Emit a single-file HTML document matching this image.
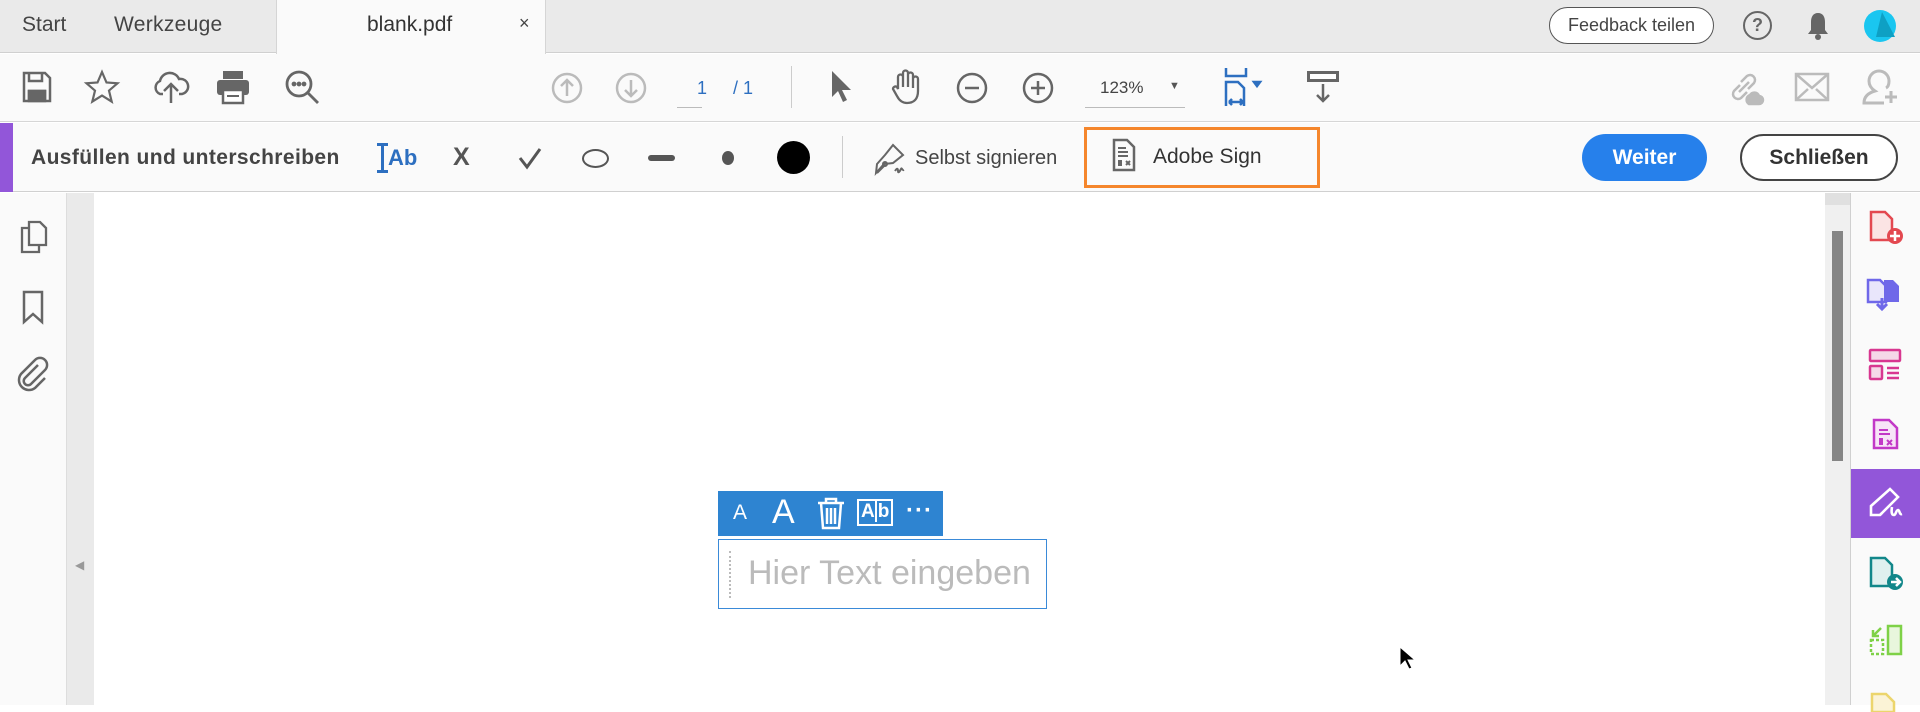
<!DOCTYPE html>
<html><head><meta charset="utf-8"><style>
*{margin:0;padding:0;box-sizing:border-box}
body{width:1920px;height:705px;overflow:hidden;background:#fff;font-family:"Liberation Sans",sans-serif;position:relative;color:#4b4b4b}
.a{position:absolute}
svg{position:absolute;overflow:visible}
</style></head><body>
<div class="a" style="left:0;top:0;width:1920px;height:53px;background:#eaeaea;border-bottom:1px solid #d0d0d0"></div>
<div class="a" style="left:276px;top:0;width:270px;height:54px;background:#fafafa;border-left:1px solid #d5d5d5;border-right:1px solid #d5d5d5"></div>
<div class="a" style="left:22px;top:13px;font-size:21px;color:#444">Start</div>
<div class="a" style="left:114px;top:13px;font-size:21px;color:#444;letter-spacing:0.3px">Werkzeuge</div>
<div class="a" style="left:367px;top:13px;font-size:21px;color:#333">blank.pdf</div>
<div class="a" style="left:519px;top:13px;font-size:18px;color:#444">×</div>
<div class="a" style="left:1549px;top:7px;width:165px;height:37px;border:1.5px solid #555;border-radius:19px;background:#fff;font-size:18px;color:#444;text-align:center;line-height:34px">Feedback teilen</div>
<div class="a" style="left:1743px;top:11px;width:29px;height:29px;border:2.5px solid #666;border-radius:50%;text-align:center;font-size:18px;font-weight:bold;color:#666;line-height:25px">?</div>
<svg style="left:1806px;top:11px" width="24" height="30"><path d="M12 2c-5 0-7 4-7 9v8l-3 4h20l-3-4v-8c0-5-2-9-7-9z" fill="#666"/><circle cx="12" cy="26" r="3" fill="#666"/></svg>
<svg style="left:1863px;top:9px" width="34" height="34"><ellipse cx="17" cy="17" rx="16" ry="16" fill="#1ac6f0"/><path d="M19 3 L32 28 L13 28Z" fill="#0ea0c4"/></svg>
<div class="a" style="left:0;top:54px;width:1920px;height:68px;background:#fafafa;border-bottom:1px solid #d6d6d6"></div>
<svg style="left:22px;top:71px" width="30" height="32" fill="none" stroke="#666" stroke-width="2.5"><path d="M2 2h21l5 5v23H2z"/><path d="M7 2v8h13V2M7 30V20h16v10"/><rect x="7" y="20" width="16" height="10" fill="#666"/></svg>
<svg style="left:85px;top:70px" width="34" height="34" fill="none" stroke="#666" stroke-width="2.2"><path d="M17 2l4.5 10.5 11 .8-8.5 7.3 2.7 11L17 25.6 7.3 31.6 10 20.6 1.5 13.3l11-.8z"/></svg>
<svg style="left:152px;top:70px" width="38" height="34" fill="none" stroke="#666" stroke-width="2.5"><path d="M11 24H8a7 7 0 0 1 0-13 10 10 0 0 1 19-2 7 7 0 0 1 3 15h-3"/><path d="M19 33V15M12 21l7-7 7 7"/></svg>
<svg style="left:216px;top:70px" width="34" height="34"><rect x="7" y="1" width="20" height="8" fill="#666"/><rect x="1" y="10" width="32" height="15" rx="3" fill="#666"/><rect x="7" y="20" width="20" height="13" fill="#fff" stroke="#666" stroke-width="2.5"/><rect x="11" y="25" width="12" height="2" fill="#666"/></svg>
<svg style="left:285px;top:70px" width="36" height="36" fill="none" stroke="#666" stroke-width="2.8"><circle cx="14" cy="14" r="12"/><path d="M23 23l10 10"/><circle cx="9" cy="14" r="1" fill="#666"/><circle cx="14" cy="14" r="1" fill="#666"/><circle cx="19" cy="14" r="1" fill="#666"/></svg>
<svg style="left:551px;top:72px" width="32" height="32" fill="none" stroke="#bbb" stroke-width="2.5"><circle cx="16" cy="16" r="14"/><path d="M16 24V9M10 14l6-6 6 6"/></svg>
<svg style="left:615px;top:72px" width="32" height="32" fill="none" stroke="#bbb" stroke-width="2.5"><circle cx="16" cy="16" r="14"/><path d="M16 8v15M10 18l6 6 6-6"/></svg>
<div class="a" style="left:697px;top:78px;font-size:18px;color:#2d6fc0">1</div>
<div class="a" style="left:677px;top:107px;width:25px;height:1px;background:#bbb"></div>
<div class="a" style="left:733px;top:78px;font-size:18px;color:#2d6fc0">/ 1</div>
<div class="a" style="left:791px;top:66px;width:1px;height:42px;background:#ccc"></div>
<svg style="left:829px;top:70px" width="24" height="34"><path d="M3 1v26l6-6 5 11 4-2-5-10h9z" fill="#666"/></svg>
<svg style="left:889px;top:69px" width="34" height="36" fill="none" stroke="#666" stroke-width="2.3"><path d="M9 20V8a2.5 2.5 0 0 1 5 0v10V4a2.5 2.5 0 0 1 5 0v14V6a2.5 2.5 0 0 1 5 0v13V10a2.5 2.5 0 0 1 5 0v12c0 8-4 12-11 12-5 0-8-3-10-7l-4-7a2.5 2.5 0 0 1 4-2z"/></svg>
<svg style="left:956px;top:72px" width="32" height="32" fill="none" stroke="#666" stroke-width="2.5"><circle cx="16" cy="16" r="14"/><path d="M9 16h14"/></svg>
<svg style="left:1022px;top:72px" width="32" height="32" fill="none" stroke="#666" stroke-width="2.5"><circle cx="16" cy="16" r="14"/><path d="M9 16h14M16 9v14"/></svg>
<div class="a" style="left:1100px;top:78px;font-size:17px;color:#444">123%</div>
<div class="a" style="left:1169px;top:80px;font-size:11px;color:#555">▼</div>
<div class="a" style="left:1085px;top:107px;width:100px;height:1px;background:#bbb"></div>
<svg style="left:1224px;top:68px" width="40" height="40" fill="none" stroke="#2d6fc0" stroke-width="2.5"><path d="M2 0v8h20V0M2 38V14h12l6 6v18M5 34h14M5 34l3-3M5 34l3 3M19 34l-3-3M19 34l-3 3"/><path d="M30 14l6 0-3 4z" fill="#2d6fc0"/></svg>
<svg style="left:1306px;top:70px" width="34" height="34"><rect x="1" y="1" width="32" height="11" fill="#666"/><rect x="4" y="4" width="26" height="5" fill="#fff"/><path d="M17 14v17M11 25l6 6 6-6" fill="none" stroke="#666" stroke-width="2.5"/></svg>
<svg style="left:1727px;top:70px" width="36" height="36" fill="none" stroke="#bbb" stroke-width="2.5"><path d="M14 12l6-6a5 5 0 0 1 7 7l-6 6M20 22l-6 6a5 5 0 0 1-7-7l6-6M12 22l10-10"/><path d="M22 34a5 5 0 0 1 1-9 5 5 0 0 1 9 1 4 4 0 0 1 0 8z" fill="#bbb"/></svg>
<svg style="left:1795px;top:73px" width="34" height="28" fill="none" stroke="#bbb" stroke-width="2.5"><rect x="1" y="1" width="32" height="26"/><path d="M1 1l16 14 16-14M1 27l12-11M33 27l-12-11"/></svg>
<svg style="left:1863px;top:69px" width="34" height="36"><path d="M16 2a10 10 0 0 0-10 10c0 5 3 8 6 10-7 2-11 6-11 12h20" fill="none" stroke="#bbb" stroke-width="3"/><path d="M16 2a10 10 0 0 1 10 10c0 3-1 6-3 7" fill="none" stroke="#bbb" stroke-width="3"/><path d="M28 22v12M22 28h12" stroke="#bbb" stroke-width="3"/></svg>
<div class="a" style="left:0;top:123px;width:1920px;height:69px;background:#fafafa;border-bottom:1px solid #d0d0d0"></div>
<div class="a" style="left:0;top:123px;width:13px;height:69px;background:#9256d9"></div>
<div class="a" style="left:31px;top:146px;font-size:21px;font-weight:bold;color:#444;letter-spacing:0.4px">Ausfüllen und unterschreiben</div>
<div class="a" style="left:381px;top:143px;width:3px;height:30px;background:#2d6fc0"></div>
<div class="a" style="left:377px;top:143px;width:11px;height:3px;background:#2d6fc0"></div>
<div class="a" style="left:377px;top:170px;width:11px;height:3px;background:#2d6fc0"></div>
<div class="a" style="left:388px;top:145px;font-size:22px;font-weight:bold;color:#2d6fc0">Ab</div>
<div class="a" style="left:453px;top:143px;font-size:25px;color:#555;font-weight:bold">X</div>
<svg style="left:518px;top:147px" width="24" height="22"><path d="M2 11l7 9L22 2" fill="none" stroke="#555" stroke-width="3"/></svg>
<div class="a" style="left:582px;top:149px;width:27px;height:19px;border:2.5px solid #555;border-radius:50%"></div>
<div class="a" style="left:648px;top:155px;width:27px;height:6px;border-radius:3px;background:#555"></div>
<div class="a" style="left:722px;top:151px;width:12px;height:14px;border-radius:50%;background:#555"></div>
<div class="a" style="left:777px;top:141px;width:33px;height:33px;border-radius:50%;background:#000"></div>
<div class="a" style="left:842px;top:136px;width:1px;height:42px;background:#ccc"></div>
<svg style="left:873px;top:141px" width="36" height="34" fill="none" stroke="#666" stroke-width="2"><path d="M20 4l10 10-10 8-9 1-8 9 1-9 8-9z"/><path d="M4 32l7-7"/><circle cx="12" cy="23" r="2"/><path d="M22 30c2-3 3-3 3 0s2 0 3-2 1 2 3 1"/></svg>
<div class="a" style="left:915px;top:147px;font-size:20px;color:#444">Selbst signieren</div>
<div class="a" style="left:1084px;top:127px;width:236px;height:61px;border:3px solid #f5862c"></div>
<svg style="left:1112px;top:138px" width="24" height="34" fill="none" stroke="#666" stroke-width="2.5"><path d="M2 2h13l7 7v23H2z"/><path d="M6 10h8M6 14h10M6 18h10" stroke-width="2"/><rect x="6" y="22" width="4" height="6" fill="#666" stroke="none"/><path d="M14 23l4 4M18 23l-4 4" stroke-width="2"/></svg>
<div class="a" style="left:1153px;top:145px;font-size:21px;color:#333">Adobe Sign</div>
<div class="a" style="left:1582px;top:134px;width:125px;height:47px;border-radius:24px;background:#2680eb;color:#fff;font-size:21px;font-weight:bold;text-align:center;line-height:47px">Weiter</div>
<div class="a" style="left:1740px;top:134px;width:158px;height:47px;border-radius:24px;border:2px solid #444;background:#fff;color:#333;font-size:21px;font-weight:bold;text-align:center;line-height:43px">Schließen</div>
<div class="a" style="left:0;top:193px;width:67px;height:512px;background:#fafafa;border-right:1px solid #ddd"></div>
<div class="a" style="left:67px;top:193px;width:27px;height:512px;background:#eaeaea"></div>
<div class="a" style="left:75px;top:558px;font-size:12px;color:#999">◀</div>
<svg style="left:20px;top:220px" width="28" height="34" fill="none" stroke="#666" stroke-width="2.3"><path d="M9 2h11l6 6v17H9z"/><path d="M9 8H2v24h17v-7"/></svg>
<svg style="left:22px;top:290px" width="22" height="34" fill="none" stroke="#666" stroke-width="2.5"><path d="M2 2h18v30l-9-8-9 8z"/></svg>
<svg style="left:16px;top:356px" width="34" height="34" fill="none" stroke="#666" stroke-width="2.5"><path d="M22 9L9 22a4 4 0 0 0 6 6l14-14a7 7 0 0 0-10-10L5 18a10 10 0 0 0 14 14l10-10"/></svg>
<div class="a" style="left:1825px;top:193px;width:25px;height:512px;background:#f0f0f0"></div>
<div class="a" style="left:1825px;top:193px;width:25px;height:12px;background:#e0e0e0"></div>
<div class="a" style="left:1832px;top:231px;width:11px;height:230px;background:#858585"></div>
<div class="a" style="left:1850px;top:193px;width:70px;height:512px;background:#fafafa;border-left:1px solid #d0d0d0"></div>
<div class="a" style="left:1851px;top:469px;width:69px;height:69px;background:#9256d9"></div>
<svg style="left:1869px;top:210px" width="36" height="36"><path d="M2 2h14l7 7v21H2z" fill="#fbe4e4" stroke="#e34850" stroke-width="2.5"/><circle cx="26" cy="26" r="8" fill="#e34850"/><path d="M26 21v10M21 26h10" stroke="#fff" stroke-width="2.5"/></svg>
<svg style="left:1866px;top:278px" width="38" height="36"><path d="M2 2h12l6 6v16H2z" fill="#e9e6fb" stroke="#6f68e9" stroke-width="2.5"/><path d="M18 2h9l6 6v16H18z" fill="#6f68e9"/><path d="M16 20v10M11 26l5 5 5-5" stroke="#6f68e9" stroke-width="3" fill="none"/></svg>
<svg style="left:1868px;top:348px" width="34" height="34" fill="#f5d8e8" stroke="#d83790" stroke-width="2.5"><rect x="2" y="2" width="30" height="11" rx="1"/><rect x="2" y="18" width="12" height="13" rx="1"/><path d="M19 20h12M19 25h12M19 30h12" fill="none"/></svg>
<svg style="left:1872px;top:418px" width="28" height="32"><path d="M2 2h15l8 8v20H2z" fill="#f7e4f7" stroke="#c238c7" stroke-width="2.5"/><path d="M7 12h9M7 16h11" stroke="#c238c7" stroke-width="2"/><rect x="7" y="20" width="4" height="7" fill="#c238c7"/><path d="M15 22l5 5M20 22l-5 5" stroke="#c238c7" stroke-width="2"/></svg>
<svg style="left:1868px;top:487px" width="36" height="34" fill="none" stroke="#fff" stroke-width="2.6"><path d="M22 2l8 8L12 28H3v-9z"/><path d="M12 28l2-2M24 20c-1 6 0 8 2 8s2-5 4-5 1 5 4 4"/></svg>
<svg style="left:1869px;top:556px" width="36" height="36"><path d="M2 2h14l7 7v21H2z" fill="#dff0ef" stroke="#12878a" stroke-width="2.5"/><circle cx="26" cy="26" r="8" fill="#12878a"/><path d="M22 26h8M27 22l4 4-4 4" stroke="#fff" stroke-width="2.5" fill="none"/></svg>
<svg style="left:1869px;top:624px" width="34" height="34" fill="none" stroke="#7ed147" stroke-width="2.5"><rect x="19" y="2" width="13" height="28" fill="#e8f6dd"/><path d="M2 16h12v14H2z" stroke-dasharray="3 2"/><path d="M12 4L4 12M4 6v6h6"/></svg>
<svg style="left:1870px;top:692px" width="30" height="20"><path d="M2 2h14l8 8v10H2z" fill="#fbf3d6" stroke="#ecd56c" stroke-width="2.5"/></svg>
<div class="a" style="left:718px;top:491px;width:225px;height:45px;background:#2e84d1"></div>
<div class="a" style="left:733px;top:501px;font-size:21px;color:#fff">A</div>
<div class="a" style="left:772px;top:493px;font-size:34px;color:#fff">A</div>
<svg style="left:817px;top:498px" width="28" height="32" fill="none" stroke="#fff" stroke-width="2.5"><path d="M1 5h26M9 5V1h10v4M4 5l2 25h16l2-25M10 10v16M14 10v16M18 10v16"/></svg>
<div class="a" style="left:857px;top:499px;width:36px;height:27px;border:2.5px solid #fff;color:#fff;font-size:19px;font-weight:bold;line-height:22px;padding-left:2px">A<span style="border-left:2px solid #fff;padding-left:1px">b</span></div>
<div class="a" style="left:906px;top:497px;font-size:24px;color:#fff;font-weight:bold;letter-spacing:1px">···</div>
<div class="a" style="left:718px;top:539px;width:329px;height:70px;border:1.5px solid #3a8ad8;background:#fff"></div>
<div class="a" style="left:729px;top:551px;width:0;height:47px;border-left:2px dotted #bbb"></div>
<div class="a" style="left:748px;top:554px;font-size:34px;color:#bbb">Hier Text eingeben</div>
<svg style="left:1399px;top:646px" width="16" height="24"><path d="M1 1v19l5-5 4 8 3-1-4-8h7z" fill="#000" stroke="#fff" stroke-width="1"/></svg>
</body></html>
